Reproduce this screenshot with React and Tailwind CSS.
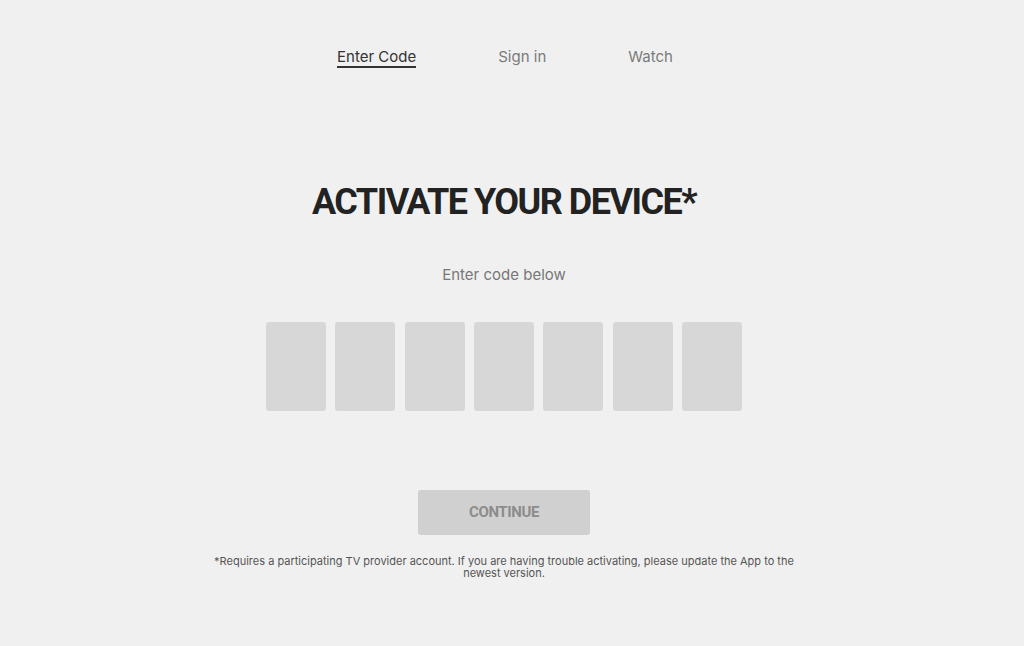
import React from "react";

const tabs = ["Enter Code", "Sign in", "Watch"];

export default function App() {
    return (
        <div className="min-h-[646px] w-full bg-[#f0f0f0] pr-[16px] font-['Inter',sans-serif]">
            <div className="flex flex-col items-center">
                <nav className="flex gap-[82px] pt-[47px] pl-[2px]">
                    {tabs.map((t, k) => (
                        <div key={k} className={k == 0 ? "text-[15px] leading-[19px] text-[#333] border-b-2 border-[#333]" : "text-[15px] leading-[19px] text-[#7a7a7a] pb-[2px]"}>
                            {t}
                        </div>
                    ))}
                </nav>
                <h1 className="mt-[112px] text-[36px] leading-[44px] font-bold text-[#222] font-['Roboto',sans-serif] tracking-[-1.5px]">
                    ACTIVATE YOUR DEVICE*
                </h1>
                <p className="mt-[41px] text-[15px] leading-[20px] text-[#777]">Enter code below</p>
                <div className="mt-[37px] flex gap-[9.3px]">
                    {[0, 1, 2, 3, 4, 5, 6].map((v) => (
                        <div key={v} className="w-[60px] h-[89px] rounded-[3px] bg-[#d7d7d7]"></div>
                    ))}
                </div>
                <button className="mt-[79px] w-[172px] h-[45px] rounded-[3px] bg-[#d0d0d0] text-[#8c8c8c] font-bold text-[15px] tracking-[-0.4px] font-['Roboto',sans-serif]">
                    CONTINUE
                </button>
                <p className="mt-[20px] w-[600px] text-center text-[11px] leading-[12px] text-[#555]">
                    *Requires a participating TV provider account. If you are having trouble activating, please update the App to the newest version.
                </p>
            </div>
        </div>
    );
}
